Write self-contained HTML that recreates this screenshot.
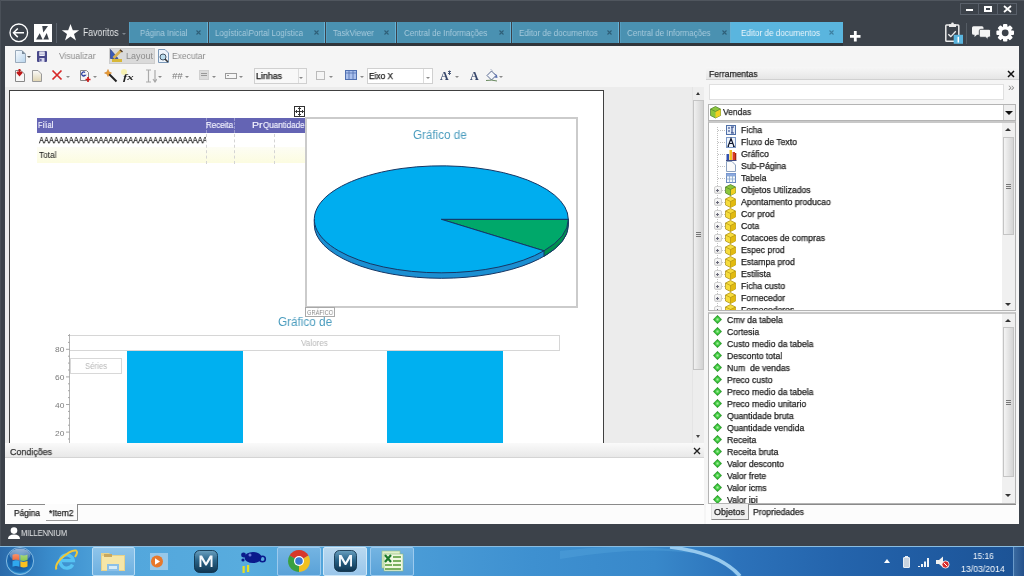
<!DOCTYPE html>
<html><head><meta charset="utf-8">
<style>
*{box-sizing:border-box}
html,body{margin:0;padding:0}
body{width:1024px;height:576px;overflow:hidden;position:relative;background:#3c424a;font-family:"Liberation Sans",sans-serif;color:#222}
.a{position:absolute}
.t{position:absolute;white-space:pre;line-height:1;transform-origin:0 0;will-change:transform}
.k{-webkit-text-stroke:0.25px currentColor}
.k2{-webkit-text-stroke:0.15px currentColor}
.dd{position:absolute;width:0;height:0;border-left:2.5px solid transparent;border-right:2.5px solid transparent;border-top:2.5px solid #8a8a8a;margin-left:0.5px;margin-top:0.5px}
</style></head><body>
<div class="a" style="left:0;top:0;width:1024px;height:1px;background:#50565e"></div>
<div class="a" style="left:0;top:0;width:1px;height:546px;background:#4a5058"></div>
<div class="a" style="left:960px;top:3px;width:57px;height:12px;border:1px solid #59606a"></div>
<div class="a" style="left:978px;top:3px;width:1px;height:12px;background:#59606a"></div>
<div class="a" style="left:997px;top:3px;width:1px;height:12px;background:#59606a"></div>
<div class="a" style="left:966px;top:9px;width:7px;height:2px;background:#fff"></div>
<div class="a" style="left:984px;top:6px;width:8px;height:6px;border:2px solid #fff"></div>
<svg class="a" style="left:1003px;top:5px" width="9" height="8"><path d="M1 1L8 7M8 1L1 7" stroke="#fff" stroke-width="1.8"/></svg>
<svg class="a" style="left:8px;top:22px" width="22" height="22"><circle cx="10.8" cy="10.8" r="8.8" fill="none" stroke="#fff" stroke-width="1.3"/><path d="M5.5 10.8H16M9.8 6.5L5.5 10.8L9.8 15.1" fill="none" stroke="#fff" stroke-width="1.5"/></svg>
<svg class="a" style="left:34px;top:24px" width="18" height="18"><rect width="18" height="18" fill="#fff"/><path d="M8.2 2H14L9.3 8.4ZM2.1 15.6L5.7 9.3L8.6 15.6ZM9.3 15.6L12.7 8.9L14.9 15.6Z" fill="#3c424a"/></svg>
<div class="a" style="left:56px;top:23px;width:1px;height:20px;background:#59606a"></div>
<svg class="a" style="left:61px;top:23px" width="19" height="19"><path d="M9.5 1L11.8 7.2H18.2L13 11.1L15 17.5L9.5 13.6L4 17.5L6 11.1L0.8 7.2H7.2Z" fill="#fff"/></svg>
<div class="dd" style="left:121px;top:32px;border-top-color:#7d848c"></div>
<div class="t" style="left:82.7px;top:27.6px;font-size:10px;color:#e4e6e8;font-family:'Liberation Sans',sans-serif;font-weight:400;font-style:normal;transform:scaleX(0.866);">Favoritos</div>
<div class="a" style="left:129px;top:22px;width:79px;height:21px;background:#4a91b1;border-left:1px solid #569ec0;border-right:1px solid #66b2d6"></div>
<svg class="a" style="left:196px;top:30px" width="5" height="5"><path d="M0.5 0.5L4.5 4.5M4.5 0.5L0.5 4.5" stroke="#2f5f78" stroke-width="1.1"/></svg>
<div class="t" style="left:139.6px;top:28.8px;font-size:9px;color:#a6cadc;font-family:'Liberation Sans',sans-serif;font-weight:400;font-style:normal;transform:scaleX(0.886);">Página Inicial</div>
<div class="a" style="left:209px;top:22px;width:116px;height:21px;background:#4a91b1;border-left:1px solid #569ec0;border-right:1px solid #66b2d6"></div>
<svg class="a" style="left:314px;top:30px" width="5" height="5"><path d="M0.5 0.5L4.5 4.5M4.5 0.5L0.5 4.5" stroke="#2f5f78" stroke-width="1.1"/></svg>
<div class="t" style="left:215.2px;top:28.8px;font-size:9px;color:#a6cadc;font-family:'Liberation Sans',sans-serif;font-weight:400;font-style:normal;transform:scaleX(0.876);">Logística\Portal Logística</div>
<div class="a" style="left:326px;top:22px;width:70px;height:21px;background:#4a91b1;border-left:1px solid #569ec0;border-right:1px solid #66b2d6"></div>
<svg class="a" style="left:384px;top:30px" width="5" height="5"><path d="M0.5 0.5L4.5 4.5M4.5 0.5L0.5 4.5" stroke="#2f5f78" stroke-width="1.1"/></svg>
<div class="t" style="left:333.4px;top:28.8px;font-size:9px;color:#a6cadc;font-family:'Liberation Sans',sans-serif;font-weight:400;font-style:normal;transform:scaleX(0.896);">TaskViewer</div>
<div class="a" style="left:397px;top:22px;width:114px;height:21px;background:#4a91b1;border-left:1px solid #569ec0;border-right:1px solid #66b2d6"></div>
<svg class="a" style="left:499px;top:30px" width="5" height="5"><path d="M0.5 0.5L4.5 4.5M4.5 0.5L0.5 4.5" stroke="#2f5f78" stroke-width="1.1"/></svg>
<div class="t" style="left:403.9px;top:28.8px;font-size:9px;color:#a6cadc;font-family:'Liberation Sans',sans-serif;font-weight:400;font-style:normal;transform:scaleX(0.891);">Central de Informações</div>
<div class="a" style="left:512px;top:22px;width:107px;height:21px;background:#4a91b1;border-left:1px solid #569ec0;border-right:1px solid #66b2d6"></div>
<svg class="a" style="left:607px;top:30px" width="5" height="5"><path d="M0.5 0.5L4.5 4.5M4.5 0.5L0.5 4.5" stroke="#2f5f78" stroke-width="1.1"/></svg>
<div class="t" style="left:518.5px;top:28.8px;font-size:9px;color:#a6cadc;font-family:'Liberation Sans',sans-serif;font-weight:400;font-style:normal;transform:scaleX(0.900);">Editor de documentos</div>
<div class="a" style="left:620px;top:22px;width:111px;height:21px;background:#4a91b1;border-left:1px solid #569ec0;border-right:1px solid #66b2d6"></div>
<svg class="a" style="left:722px;top:30px" width="5" height="5"><path d="M0.5 0.5L4.5 4.5M4.5 0.5L0.5 4.5" stroke="#2f5f78" stroke-width="1.1"/></svg>
<div class="t" style="left:626.7px;top:28.8px;font-size:9px;color:#a6cadc;font-family:'Liberation Sans',sans-serif;font-weight:400;font-style:normal;transform:scaleX(0.894);">Central de Informações</div>
<div class="a" style="left:731px;top:22px;width:112px;height:21px;background:#5ab5de;border-left:1px solid #5ab5de;border-right:1px solid #5ab5de"></div>
<svg class="a" style="left:829px;top:30px" width="5" height="5"><path d="M0.5 0.5L4.5 4.5M4.5 0.5L0.5 4.5" stroke="#3d7fa0" stroke-width="1.1"/></svg>
<div class="t" style="left:740.7px;top:28.8px;font-size:9px;color:#eaf5fb;font-family:'Liberation Sans',sans-serif;font-weight:400;font-style:normal;transform:scaleX(0.903);">Editor de documentos</div>
<svg class="a" style="left:849px;top:30px" width="13" height="13"><path d="M6.3 1V11.5M1 6.3H11.5" stroke="#fff" stroke-width="2.8"/></svg>
<svg class="a" style="left:944px;top:22px" width="22" height="23"><rect x="1.8" y="3" width="13" height="16.2" rx="0.8" fill="none" stroke="#ececec" stroke-width="1.5"/><path d="M5 2.2H12V5H5Z" fill="#ececec"/><circle cx="8.5" cy="1.8" r="1.3" fill="#ececec"/><path d="M4.3 12.3L6.8 14.6L11.8 9.3" fill="none" stroke="#ececec" stroke-width="1.3"/><rect x="9.7" y="12.8" width="9.3" height="9" fill="#5ab5de"/><path d="M14.3 14.8V20.5" stroke="#fff" stroke-width="1.5"/></svg>
<div class="a" style="left:966px;top:23px;width:1px;height:21px;background:#555c64"></div>
<svg class="a" style="left:971px;top:25px" width="21" height="16"><path d="M2.5 1.2H11A1.5 1.5 0 0 1 12.5 2.7V8.3A1.5 1.5 0 0 1 11 9.8H6L3.5 12V9.8H2.5A1.5 1.5 0 0 1 1 8.3V2.7A1.5 1.5 0 0 1 2.5 1.2Z" fill="#f4f4f4"/><path d="M9.8 4.3H18A1.5 1.5 0 0 1 19.5 5.8V10.8A1.5 1.5 0 0 1 18 12.3H17V14.5L14.5 12.3H9.8A1.5 1.5 0 0 1 8.3 10.8V5.8A1.5 1.5 0 0 1 9.8 4.3Z" fill="#f4f4f4" stroke="#3c424a" stroke-width="0.9"/></svg>
<svg class="a" style="left:995px;top:23px" width="21" height="20"><g transform="translate(10.2 9.8)"><g fill="#fff"><circle r="6.6"/><rect x="-2.2" y="-8.8" width="4.4" height="17.6" rx="1"/><rect x="-2.2" y="-8.8" width="4.4" height="17.6" rx="1" transform="rotate(45)"/><rect x="-2.2" y="-8.8" width="4.4" height="17.6" rx="1" transform="rotate(90)"/><rect x="-2.2" y="-8.8" width="4.4" height="17.6" rx="1" transform="rotate(135)"/></g><circle r="3.4" fill="#3c424a"/></g></svg>
<div class="a" style="left:129px;top:43px;width:714px;height:3px;background:#30353b"></div>
<div class="a" style="left:5px;top:46px;width:1014px;height:478px;background:#f5f5f5"></div>
<svg class="a" style="left:14.5px;top:49.5px" width="11" height="13"><defs><linearGradient id="nd" x1="0" y1="0" x2="1" y2="1"><stop offset="0" stop-color="#f8fbfe"/><stop offset="1" stop-color="#b8d4ec"/></linearGradient></defs><path d="M0.5 0.5H7L10.5 4V12.5H0.5Z" fill="url(#nd)" stroke="#9aaabb"/><path d="M7 0.5V4H10.5Z" fill="#7a8a9a"/></svg>
<div class="dd" style="left:26.5px;top:55.5px;border-top-color:#555"></div>
<svg class="a" style="left:37px;top:50.5px" width="10" height="11"><path d="M0 1Q0 0 1 0H9Q10 0 10 1V10Q10 11 9 11H1Q0 11 0 10Z" fill="#48488a"/><rect x="2.3" y="0.5" width="5.4" height="4.5" fill="#f4f4fa"/><path d="M3 2H7M3 3.5H7" stroke="#9a9ac8" stroke-width="0.6"/><rect x="2.5" y="7" width="5" height="4" fill="#d8d8ee"/><rect x="3.2" y="7.8" width="1.3" height="2.5" fill="#48488a"/></svg>
<div class="a" style="left:109px;top:48px;width:46px;height:16px;background:#dadada;border:1px solid #cdcdcd"></div>
<svg class="a" style="left:110px;top:49px" width="14" height="14"><path d="M0.5 0.5L8 9.5H0.5Z" fill="#3a5ab8" stroke="#283c80" stroke-width="0.7"/><path d="M3.5 9L11 1.5" stroke="#d8b050" stroke-width="2.6"/><path d="M10 0.8L12.5 3" stroke="#503820" stroke-width="1.5"/><rect x="2" y="10" width="10" height="3" fill="#d8b838"/></svg>
<svg class="a" style="left:157px;top:49px" width="13" height="14"><path d="M1.5 0.5H8L11.5 4V13.5H1.5Z" fill="#eef4fb" stroke="#7a98b8"/><circle cx="6" cy="8" r="3" fill="#bde" stroke="#456"/><path d="M8 10L11 13" stroke="#333" stroke-width="1.5"/></svg>
<div class="t" style="left:59.4px;top:52.3px;font-size:9px;color:#8c8c8c;font-family:'Liberation Sans',sans-serif;font-weight:400;font-style:normal;transform:scaleX(0.944);">Visualizar</div>
<div class="t" style="left:125.5px;top:52.3px;font-size:9px;color:#8c8c8c;font-family:'Liberation Sans',sans-serif;font-weight:400;font-style:normal;transform:scaleX(0.988);">Layout</div>
<div class="t" style="left:172.4px;top:52.3px;font-size:9px;color:#8c8c8c;font-family:'Liberation Sans',sans-serif;font-weight:400;font-style:normal;transform:scaleX(0.940);">Executar</div>
<svg class="a" style="left:14px;top:69px" width="12" height="13"><path d="M1.5 1.5H7L10.5 5V12.5H1.5Z" fill="#f8f8f8" stroke="#888"/><path d="M5.5 0V5M3 3L5.5 6L8 3" fill="none" stroke="#c01818" stroke-width="2"/></svg>
<svg class="a" style="left:31px;top:69px" width="12" height="13"><defs><linearGradient id="dg" x1="0" y1="0" x2="0" y2="1"><stop offset="0" stop-color="#fafafa"/><stop offset="1" stop-color="#e0d4b0"/></linearGradient></defs><path d="M1.5 1.5H7L10.5 5V12.5H1.5Z" fill="url(#dg)" stroke="#9a9a9a"/></svg>
<svg class="a" style="left:51px;top:69px" width="12" height="12"><path d="M1.5 1.5L10.5 10.5M10.5 1.5L1.5 10.5" stroke="#d82828" stroke-width="1.7"/></svg>
<div class="dd" style="left:65px;top:75px"></div>
<svg class="a" style="left:79px;top:69px" width="13" height="14"><path d="M1.5 1.5H7.5L9.5 3.5V11.5H1.5Z" fill="#f6f6f6" stroke="#888"/><path d="M6 3.5A2 2 0 1 0 6 6.5H4.5" fill="none" stroke="#2a40a0" stroke-width="1.3"/><path d="M9 8V13M6.5 10.5H11.5" stroke="#d01818" stroke-width="1.6"/></svg>
<div class="dd" style="left:92px;top:75px"></div>
<svg class="a" style="left:104px;top:69px" width="14" height="14"><path d="M5 5L12.5 12.5" stroke="#222" stroke-width="2"/><path d="M4 0.5L5 3L7.5 4L5 5L4 7.5L3 5L0.5 4L3 3Z" fill="#e89a30" stroke="#c87010" stroke-width="0.5"/></svg>
<svg class="a" style="left:144px;top:69px" width="13" height="14"><path d="M2 1H7M2 13H7M4.5 1V13M11 1V12M9 10L11 13L13 10" fill="none" stroke="#aaa" stroke-width="1.2"/></svg>
<div class="dd" style="left:157px;top:75px"></div>
<div class="dd" style="left:184px;top:75px"></div>
<div class="a" style="left:199px;top:70px;width:10px;height:10px;background:#dcdcdc;border:1px solid #d0d0d0"></div><div class="a" style="left:201px;top:73px;width:6px;height:1px;background:#999;box-shadow:0 2px 0 #999"></div>
<div class="dd" style="left:211px;top:75px"></div>
<div class="a" style="left:225px;top:72.5px;width:12px;height:6px;border:1px solid #9a9a9a;background:#f6f6f6"></div><div class="a" style="left:227px;top:75px;width:2px;height:1px;background:#999"></div>
<div class="dd" style="left:238px;top:75px"></div>
<div class="a" style="left:254px;top:68px;width:53px;height:16px;background:#f8f8f8;border:1px solid #d0d0d0"></div>
<div class="a" style="left:298px;top:69px;width:1px;height:14px;background:#dcdcdc"></div>
<div class="dd" style="left:298.5px;top:76px"></div>
<div class="a" style="left:316px;top:71px;width:9px;height:9px;border:1px solid #bbb"></div>
<div class="dd" style="left:328px;top:75px"></div>
<svg class="a" style="left:345px;top:70px" width="12" height="10"><rect x="0.5" y="0.5" width="11" height="9" fill="#aac0ec" stroke="#5070b0"/><path d="M0.5 3H11.5M4 0.5V9.5M8 0.5V9.5" stroke="#5070b0" stroke-width="0.8"/></svg>
<div class="dd" style="left:359px;top:75px"></div>
<div class="a" style="left:367px;top:68px;width:66px;height:16px;background:#fff;border:1px solid #d0d0d0"></div>
<div class="a" style="left:423px;top:69px;width:1px;height:14px;background:#dcdcdc"></div>
<div class="dd" style="left:425px;top:76px"></div>
<div class="dd" style="left:454px;top:75px"></div>
<svg class="a" style="left:485px;top:68px" width="14" height="15"><path d="M6 1.5L7 2.5" stroke="#6a7aa0" stroke-width="1"/><path d="M2 7.5L6.5 3L11 7.5L6.5 12Z" fill="#f4f6fa" stroke="#5a6a90" stroke-width="1"/><path d="M8.5 5L11 7.5L9.5 9.5L12.5 10L12 7Z" fill="#5a70b0"/><path d="M1 12.5Q7 11.5 12 13" fill="none" stroke="#6a8a60" stroke-width="1"/></svg>
<div class="dd" style="left:498px;top:75px"></div>
<div class="a" style="left:121px;top:69px;width:6px;height:6px;border-radius:3px;background:#f8f0a0;opacity:0.8"></div>
<div class="t" style="left:122.7px;top:72.5px;font-size:9px;color:#222;font-family:'Liberation Serif',serif;font-weight:700;font-style:italic;transform:scaleX(1.413);">fx</div>
<div class="t" style="left:171.7px;top:72.0px;font-size:9px;color:#7a7a7a;font-family:'Liberation Sans',sans-serif;font-weight:400;font-style:italic;transform:scaleX(1.058);">##</div>
<div class="t k" style="left:255.5px;top:72.0px;font-size:9px;color:#1a1a1a;font-family:'Liberation Sans',sans-serif;font-weight:400;font-style:normal;transform:scaleX(0.980);">Linhas</div>
<div class="t k" style="left:368.5px;top:72.0px;font-size:9px;color:#1a1a1a;font-family:'Liberation Sans',sans-serif;font-weight:400;font-style:normal;transform:scaleX(0.926);">Eixo X</div>
<div class="t" style="left:439.9px;top:69.5px;font-size:12px;color:#36466a;font-family:'Liberation Serif',serif;font-weight:700;font-style:normal;transform:scaleX(0.969);">A</div>
<div class="t" style="left:469.5px;top:69.5px;font-size:12px;color:#36466a;font-family:'Liberation Serif',serif;font-weight:700;font-style:normal;transform:scaleX(0.957);">A</div>
<svg class="a" style="left:447px;top:69.5px" width="5" height="6"><path d="M1 1L4 4M4 1L1 4M2.5 0.5V5" stroke="#36466a" stroke-width="0.9"/></svg>
<div class="a" style="left:5px;top:87px;width:699px;height:356px;background:#ececec"></div>
<div class="a" style="left:9px;top:90px;width:595px;height:353px;background:#fff;border:1px solid #404040;border-bottom:none"></div>
<div class="a" style="left:294px;top:106px;width:11px;height:11px;border:1px solid #333;background:#fff"></div>
<svg class="a" style="left:295px;top:107px" width="9" height="9"><path d="M4.5 0.5V8.5M0.5 4.5H8.5M3 2L4.5 0.5L6 2M3 7L4.5 8.5L6 7M2 3L0.5 4.5L2 6M7 3L8.5 4.5L7 6" fill="none" stroke="#222" stroke-width="0.9"/></svg>
<div class="a" style="left:37px;top:118px;width:268px;height:15px;background:#6464b4"></div>
<div class="a" style="left:37px;top:147px;width:268px;height:16px;background:linear-gradient(#fdfdf4,#fcfce0)"></div>
<div class="a" style="left:206px;top:118px;width:0;height:15px;border-left:1px dashed #9898cc"></div>
<div class="a" style="left:234px;top:118px;width:0;height:15px;border-left:1px dashed #9898cc"></div>
<div class="a" style="left:206px;top:134px;width:0;height:30px;border-left:1px dashed #d4d4d4"></div>
<div class="a" style="left:234px;top:134px;width:0;height:30px;border-left:1px dashed #d4d4d4"></div>
<div class="a" style="left:274px;top:134px;width:0;height:30px;border-left:1px dashed #d4d4d4"></div>
<div class="t k2" style="left:38.4px;top:121.4px;font-size:9px;color:#f4f4ff;font-family:'Liberation Sans',sans-serif;font-weight:400;font-style:normal;transform:scaleX(0.826);">Filial</div>
<div class="t k2" style="left:206.2px;top:121.4px;font-size:9px;color:#f4f4ff;font-family:'Liberation Sans',sans-serif;font-weight:400;font-style:normal;transform:scaleX(0.888);">Receita</div>
<div class="t k2" style="left:251.7px;top:121.4px;font-size:9px;color:#f4f4ff;font-family:'Liberation Sans',sans-serif;font-weight:400;font-style:normal;transform:scaleX(1.178);">Pr</div>
<div class="t k2" style="left:262.7px;top:121.4px;font-size:9px;color:#f4f4ff;font-family:'Liberation Sans',sans-serif;font-weight:400;font-style:normal;transform:scaleX(0.894);">Quantidade</div>
<div class="a" style="left:37px;top:133px;width:169px;height:14px;overflow:hidden">
<div class="t k" style="left:1.8px;top:3.0px;font-size:9px;color:#1a1a1a;font-family:'Liberation Sans',sans-serif;font-weight:400;font-style:normal;transform:scaleX(0.826);">AAAAAAAAAAAAAAAAAAAAAAAAAAAAAAAAAA</div>
</div>
<div class="t" style="left:38.8px;top:151.2px;font-size:9px;color:#111;font-family:'Liberation Sans',sans-serif;font-weight:400;font-style:normal;transform:scaleX(0.920);">Total</div>
<div class="a" style="left:305px;top:117px;width:273px;height:191px;border:2px solid #cbcbcb"></div>
<svg class="a" style="left:305px;top:150px" width="273" height="140">
<g transform="translate(136.3 69.3)">
<path d="M-127 0V5.5A127 53.5 0 0 0 127 5.5V0Z" fill="#1b8fd2" stroke="#163664" stroke-width="1"/>
<path d="M102.7 31.5V37A127 53.5 0 0 0 127 5.5V0Z" fill="#00904f" stroke="#163664" stroke-width="1"/>
<path d="M0 0L127 0A127 53.5 0 0 1 102.7 31.5Z" fill="#00a86a" stroke="#163664" stroke-width="1"/>
<path d="M0 0L102.7 31.5A127 53.5 0 1 1 127 0Z" fill="#00adef" stroke="#163664" stroke-width="1"/>
</g></svg>
<div class="a" style="left:305px;top:307px;width:30px;height:10px;border:1px solid #a8a8a8;background:#fff"></div>
<div class="t" style="left:412.6px;top:128.8px;font-size:12px;color:#4a9cbe;font-family:'Liberation Sans',sans-serif;font-weight:400;font-style:normal;transform:scaleX(0.970);">Gráfico de</div>
<div class="t" style="left:306.7px;top:308.5px;font-size:7px;color:#8a8a8a;font-family:'Liberation Sans',sans-serif;font-weight:400;font-style:normal;transform:scaleX(0.818);">GRÁFICO</div>
<div class="t" style="left:278.2px;top:315.8px;font-size:12px;color:#4a9cbe;font-family:'Liberation Sans',sans-serif;font-weight:400;font-style:normal;transform:scaleX(0.977);">Gráfico de</div>
<div class="a" style="left:70px;top:335px;width:490px;height:16px;border:1px solid #d6d6d6;border-left:none"></div>
<div class="a" style="left:69px;top:334px;width:1px;height:109px;background:#b4b4b4"></div>
<div class="a" style="left:70px;top:358px;width:52px;height:16px;border:1px solid #d8d8d8"></div>
<div class="a" style="left:127px;top:351px;width:116px;height:92px;background:#00b0f0"></div>
<div class="a" style="left:387px;top:351px;width:116px;height:92px;background:#00b0f0"></div>
<div class="t" style="left:301.3px;top:338.6px;font-size:9px;color:#b8b8b8;font-family:'Liberation Sans',sans-serif;font-weight:400;font-style:normal;transform:scaleX(0.901);">Valores</div>
<div class="t" style="left:84.5px;top:362.0px;font-size:9px;color:#b8b8b8;font-family:'Liberation Sans',sans-serif;font-weight:400;font-style:normal;transform:scaleX(0.866);">Séries</div>
<div class="t" style="left:54.7px;top:346.4px;font-size:8px;color:#7a7a7a;font-family:'Liberation Sans',sans-serif;font-weight:400;font-style:normal;transform:scaleX(1.050);">80</div>
<div class="t" style="left:54.7px;top:373.9px;font-size:8px;color:#7a7a7a;font-family:'Liberation Sans',sans-serif;font-weight:400;font-style:normal;transform:scaleX(1.050);">60</div>
<div class="t" style="left:54.7px;top:401.6px;font-size:8px;color:#7a7a7a;font-family:'Liberation Sans',sans-serif;font-weight:400;font-style:normal;transform:scaleX(1.050);">40</div>
<div class="t" style="left:54.7px;top:429.8px;font-size:8px;color:#7a7a7a;font-family:'Liberation Sans',sans-serif;font-weight:400;font-style:normal;transform:scaleX(1.050);">20</div>
<svg class="a" style="left:64px;top:330px" width="6" height="113"><rect x="4" y="5.0" width="2" height="1" fill="#a8a8a8"/><rect x="4" y="11.9" width="2" height="1" fill="#a8a8a8"/><rect x="2" y="18.8" width="4" height="1" fill="#a8a8a8"/><rect x="4" y="25.7" width="2" height="1" fill="#a8a8a8"/><rect x="4" y="32.6" width="2" height="1" fill="#a8a8a8"/><rect x="4" y="39.5" width="2" height="1" fill="#a8a8a8"/><rect x="2" y="46.4" width="4" height="1" fill="#a8a8a8"/><rect x="4" y="53.3" width="2" height="1" fill="#a8a8a8"/><rect x="4" y="60.2" width="2" height="1" fill="#a8a8a8"/><rect x="4" y="67.1" width="2" height="1" fill="#a8a8a8"/><rect x="2" y="74.0" width="4" height="1" fill="#a8a8a8"/><rect x="4" y="80.9" width="2" height="1" fill="#a8a8a8"/><rect x="4" y="87.8" width="2" height="1" fill="#a8a8a8"/><rect x="4" y="94.7" width="2" height="1" fill="#a8a8a8"/><rect x="2" y="101.6" width="4" height="1" fill="#a8a8a8"/><rect x="4" y="108.5" width="2" height="1" fill="#a8a8a8"/></svg>
<div class="a" style="left:692px;top:87px;width:12px;height:356px;background:#ededed;border-left:1px solid #e4e4e4"></div>
<div class="a" style="left:696px;top:91.5px;width:0;height:0;border-left:2.5px solid transparent;border-right:2.5px solid transparent;border-bottom:3px solid #333"></div>
<div class="a" style="left:693px;top:100px;width:11px;height:270px;background:linear-gradient(90deg,#f0f0f0,#d2d2d2);border:1px solid #c4c4c4"></div>
<div class="a" style="left:696px;top:232px;width:5px;height:1px;background:#777;box-shadow:0 2px 0 #777,0 4px 0 #777"></div>
<div class="a" style="left:696px;top:435px;width:0;height:0;border-left:2.5px solid transparent;border-right:2.5px solid transparent;border-top:3px solid #444"></div>
<div class="a" style="left:5px;top:443px;width:699px;height:15px;background:linear-gradient(#fafafa,#e8e8e8);border-bottom:1px solid #d4d4d4"></div>
<svg class="a" style="left:693px;top:447px" width="8" height="8"><path d="M1 1L7 7M7 1L1 7" stroke="#222" stroke-width="1.4"/></svg>
<div class="a" style="left:5px;top:458px;width:699px;height:46px;background:#fff"></div>
<div class="a" style="left:5px;top:504px;width:699px;height:20px;background:#fcfcfc"></div>
<div class="a" style="left:7px;top:504px;width:38px;height:1px;background:#8a8a8a"></div>
<div class="a" style="left:77px;top:504px;width:627px;height:1px;background:#8a8a8a"></div>
<div class="a" style="left:77px;top:504px;width:1px;height:17px;background:#8a8a8a"></div>
<div class="a" style="left:46px;top:520px;width:32px;height:1px;background:#9a9a9a"></div>
<div class="t k" style="left:9.7px;top:448.0px;font-size:9px;color:#333;font-family:'Liberation Sans',sans-serif;font-weight:400;font-style:normal;transform:scaleX(0.988);">Condições</div>
<div class="t k" style="left:14.3px;top:508.6px;font-size:9px;color:#222;font-family:'Liberation Sans',sans-serif;font-weight:400;font-style:normal;transform:scaleX(0.928);">Página</div>
<div class="t k" style="left:48.7px;top:508.6px;font-size:9px;color:#222;font-family:'Liberation Sans',sans-serif;font-weight:400;font-style:normal;transform:scaleX(0.942);">*Item2</div>

<div class="a" style="left:706px;top:67px;width:313px;height:13px;background:linear-gradient(#f7f7f7,#e6e6e6);border-bottom:1px solid #d0d0d0"></div>
<svg class="a" style="left:1007px;top:70px" width="8" height="8"><path d="M1 1L7 7M7 1L1 7" stroke="#111" stroke-width="1.5"/></svg>
<div class="a" style="left:709px;top:84px;width:295px;height:16px;background:#fff;border:1px solid #e0e0e0"></div>
<div class="a" style="left:708px;top:104px;width:308px;height:17px;background:#fff;border:1px solid #b4b4b4"></div>
<div class="a" style="left:1003px;top:105px;width:12px;height:15px;background:#eeeeee;border-left:1px solid #c8c8c8"></div>
<div class="a" style="left:1005px;top:111px;width:0;height:0;border-left:4px solid transparent;border-right:4px solid transparent;border-top:4px solid #111"></div>
<svg class="a" style="left:710px;top:106px" width="11" height="13"><path d="M5.5 0.5L10.5 3V9.5L5.5 12L0.5 9.5V3Z" fill="#8cc63c" stroke="#4a7a28" stroke-width="0.7"/><path d="M5.5 5.5V12L10.5 9.5V3Z" fill="#f0d020"/><path d="M0.5 3L5.5 5.5L10.5 3" fill="none" stroke="#4a7a28" stroke-width="0.6"/></svg>
<div class="t k" style="left:709.3px;top:70.1px;font-size:9px;color:#222;font-family:'Liberation Sans',sans-serif;font-weight:400;font-style:normal;transform:scaleX(0.952);">Ferramentas</div>
<div class="t" style="left:1007.7px;top:83.0px;font-size:10px;color:#8a8a8a;font-family:'Liberation Sans',sans-serif;font-weight:400;font-style:normal;transform:scaleX(1.187);">»</div>
<div class="t k" style="left:722.8px;top:107.6px;font-size:9px;color:#222;font-family:'Liberation Sans',sans-serif;font-weight:400;font-style:normal;transform:scaleX(0.942);">Vendas</div>
<div class="a" style="left:708px;top:121px;width:308px;height:190px;background:#fff;border:1px solid #b4b4b4;border-top:2px solid #c8c8c8"></div>
<div class="a" style="left:1002px;top:123px;width:13px;height:187px;background:#f0f0f0"></div>
<div class="a" style="left:1005px;top:128px;width:0;height:0;border-left:3px solid transparent;border-right:3px solid transparent;border-bottom:3px solid #333"></div>
<div class="a" style="left:1003px;top:137px;width:11px;height:98px;background:linear-gradient(90deg,#f4f4f4,#d4d4d4);border:1px solid #c4c4c4"></div>
<div class="a" style="left:1006px;top:184px;width:5px;height:1px;background:#777;box-shadow:0 2px 0 #777,0 4px 0 #777"></div>
<div class="a" style="left:1005px;top:303px;width:0;height:0;border-left:3px solid transparent;border-right:3px solid transparent;border-top:3px solid #333"></div>
<div class="a" style="left:709px;top:123px;width:293px;height:187px;overflow:hidden">
<div class="a" style="left:8px;top:4px;width:0;height:183px;border-left:1px dotted #c0c0c0"></div>
<div class="a" style="left:9px;top:7px;width:7px;height:0;border-top:1px dotted #c0c0c0"></div>
<svg class="a" style="left:17px;top:2px" width="10" height="10"><rect x="0.5" y="0.5" width="9" height="9" fill="#e4ecf8" stroke="#5070a8"/><path d="M2 3H4M2 6H4M6 2V8M5 2H8M5 8H8" stroke="#203a80" stroke-width="1"/></svg>
<div class="t k" style="left:32.0px;top:2.6px;font-size:9px;color:#1a1a1a;font-family:'Liberation Sans',sans-serif;font-weight:400;font-style:normal;transform:scaleX(0.96);">Ficha</div>
<div class="a" style="left:9px;top:19px;width:7px;height:0;border-top:1px dotted #c0c0c0"></div>
<svg class="a" style="left:17px;top:14px" width="10" height="11"><rect x="0.5" y="0.5" width="9" height="10" fill="#eef4fc" stroke="#7a98c8"/><path d="M2 9.5L5 1.5L8 9.5M3.2 6.5H6.8M1.5 9.5H3M7 9.5H8.8" fill="none" stroke="#101830" stroke-width="1.2"/></svg>
<div class="t k" style="left:32.0px;top:14.6px;font-size:9px;color:#1a1a1a;font-family:'Liberation Sans',sans-serif;font-weight:400;font-style:normal;transform:scaleX(0.96);">Fluxo de Texto</div>
<div class="a" style="left:9px;top:31px;width:7px;height:0;border-top:1px dotted #c0c0c0"></div>
<svg class="a" style="left:16px;top:26px" width="12" height="12"><path d="M1 11.5H11.5" stroke="#404a80" stroke-width="1"/><rect x="1.5" y="5" width="2.5" height="6" fill="#3050b0"/><rect x="4.5" y="1" width="2.5" height="10" fill="#f0c020"/><rect x="7.5" y="3" width="2.5" height="8" fill="#d83a20"/><rect x="10" y="4" width="1.3" height="7" fill="#a02010"/></svg>
<div class="t k" style="left:32.0px;top:26.6px;font-size:9px;color:#1a1a1a;font-family:'Liberation Sans',sans-serif;font-weight:400;font-style:normal;transform:scaleX(0.96);">Gráfico</div>
<div class="a" style="left:9px;top:43px;width:7px;height:0;border-top:1px dotted #c0c0c0"></div>
<svg class="a" style="left:17px;top:38px" width="10" height="11"><path d="M0.5 0.5H6L9.5 4V10.5H0.5Z" fill="#fafafa" stroke="#8aa0c0"/></svg>
<div class="t k" style="left:32.0px;top:38.6px;font-size:9px;color:#1a1a1a;font-family:'Liberation Sans',sans-serif;font-weight:400;font-style:normal;transform:scaleX(0.96);">Sub-Página</div>
<div class="a" style="left:9px;top:55px;width:7px;height:0;border-top:1px dotted #c0c0c0"></div>
<svg class="a" style="left:17px;top:50px" width="10" height="10"><rect x="0.5" y="0.5" width="9" height="9" fill="#f4f8fc" stroke="#6a8ac0"/><rect x="0.5" y="0.5" width="9" height="2.5" fill="#8aa8e0"/><path d="M0.5 3H9.5M0.5 6H9.5M3.5 3V9.5M6.5 3V9.5" stroke="#8aa8d0" stroke-width="0.8"/></svg>
<div class="t k" style="left:32.0px;top:50.6px;font-size:9px;color:#1a1a1a;font-family:'Liberation Sans',sans-serif;font-weight:400;font-style:normal;transform:scaleX(0.96);">Tabela</div>
<div class="a" style="left:4.5px;top:63px;width:8px;height:8px;border:1px solid #d0d0d0;border-radius:2px;background:linear-gradient(#fafafa,#e4e4e4)"></div><div class="a" style="left:7px;top:66.5px;width:3px;height:1px;background:#6a6a7a"></div><div class="a" style="left:8px;top:65.5px;width:1px;height:3px;background:#6a6a7a"></div><div class="a" style="left:12.5px;top:67px;width:3.5px;height:0;border-top:1px dotted #c8c8c8"></div><svg class="a" style="left:16px;top:61px" width="11" height="12"><path d="M5.5 0.5L10.5 3V9L5.5 11.5L0.5 9V3Z" fill="#8cc63c" stroke="#4a7a28" stroke-width="0.7"/><path d="M5.5 5.5V11.5L10.5 9V3Z" fill="#f0d020"/><path d="M0.5 3L5.5 5.5L10.5 3M5.5 5.5V11.5" fill="none" stroke="#4a7a28" stroke-width="0.6"/></svg>
<div class="t k" style="left:32.0px;top:62.6px;font-size:9px;color:#1a1a1a;font-family:'Liberation Sans',sans-serif;font-weight:400;font-style:normal;transform:scaleX(0.96);">Objetos Utilizados</div>
<div class="a" style="left:4.5px;top:75px;width:8px;height:8px;border:1px solid #d0d0d0;border-radius:2px;background:linear-gradient(#fafafa,#e4e4e4)"></div><div class="a" style="left:7px;top:78.5px;width:3px;height:1px;background:#6a6a7a"></div><div class="a" style="left:8px;top:77.5px;width:1px;height:3px;background:#6a6a7a"></div><div class="a" style="left:12.5px;top:79px;width:3.5px;height:0;border-top:1px dotted #c8c8c8"></div><svg class="a" style="left:16px;top:73px" width="11" height="12"><path d="M5.5 0.5L10.5 3V9L5.5 11.5L0.5 9V3Z" fill="#f6dc3c" stroke="#a88a10" stroke-width="0.7"/><path d="M5.5 5.5V11.5L10.5 9V3Z" fill="#e2ba10"/><path d="M0.5 3L5.5 5.5L10.5 3M5.5 5.5V11.5" fill="none" stroke="#a88a10" stroke-width="0.6"/></svg>
<div class="t k" style="left:32.0px;top:74.6px;font-size:9px;color:#1a1a1a;font-family:'Liberation Sans',sans-serif;font-weight:400;font-style:normal;transform:scaleX(0.96);">Apontamento producao</div>
<div class="a" style="left:4.5px;top:87px;width:8px;height:8px;border:1px solid #d0d0d0;border-radius:2px;background:linear-gradient(#fafafa,#e4e4e4)"></div><div class="a" style="left:7px;top:90.5px;width:3px;height:1px;background:#6a6a7a"></div><div class="a" style="left:8px;top:89.5px;width:1px;height:3px;background:#6a6a7a"></div><div class="a" style="left:12.5px;top:91px;width:3.5px;height:0;border-top:1px dotted #c8c8c8"></div><svg class="a" style="left:16px;top:85px" width="11" height="12"><path d="M5.5 0.5L10.5 3V9L5.5 11.5L0.5 9V3Z" fill="#f6dc3c" stroke="#a88a10" stroke-width="0.7"/><path d="M5.5 5.5V11.5L10.5 9V3Z" fill="#e2ba10"/><path d="M0.5 3L5.5 5.5L10.5 3M5.5 5.5V11.5" fill="none" stroke="#a88a10" stroke-width="0.6"/></svg>
<div class="t k" style="left:32.0px;top:86.6px;font-size:9px;color:#1a1a1a;font-family:'Liberation Sans',sans-serif;font-weight:400;font-style:normal;transform:scaleX(0.96);">Cor prod</div>
<div class="a" style="left:4.5px;top:99px;width:8px;height:8px;border:1px solid #d0d0d0;border-radius:2px;background:linear-gradient(#fafafa,#e4e4e4)"></div><div class="a" style="left:7px;top:102.5px;width:3px;height:1px;background:#6a6a7a"></div><div class="a" style="left:8px;top:101.5px;width:1px;height:3px;background:#6a6a7a"></div><div class="a" style="left:12.5px;top:103px;width:3.5px;height:0;border-top:1px dotted #c8c8c8"></div><svg class="a" style="left:16px;top:97px" width="11" height="12"><path d="M5.5 0.5L10.5 3V9L5.5 11.5L0.5 9V3Z" fill="#f6dc3c" stroke="#a88a10" stroke-width="0.7"/><path d="M5.5 5.5V11.5L10.5 9V3Z" fill="#e2ba10"/><path d="M0.5 3L5.5 5.5L10.5 3M5.5 5.5V11.5" fill="none" stroke="#a88a10" stroke-width="0.6"/></svg>
<div class="t k" style="left:32.0px;top:98.6px;font-size:9px;color:#1a1a1a;font-family:'Liberation Sans',sans-serif;font-weight:400;font-style:normal;transform:scaleX(0.96);">Cota</div>
<div class="a" style="left:4.5px;top:111px;width:8px;height:8px;border:1px solid #d0d0d0;border-radius:2px;background:linear-gradient(#fafafa,#e4e4e4)"></div><div class="a" style="left:7px;top:114.5px;width:3px;height:1px;background:#6a6a7a"></div><div class="a" style="left:8px;top:113.5px;width:1px;height:3px;background:#6a6a7a"></div><div class="a" style="left:12.5px;top:115px;width:3.5px;height:0;border-top:1px dotted #c8c8c8"></div><svg class="a" style="left:16px;top:109px" width="11" height="12"><path d="M5.5 0.5L10.5 3V9L5.5 11.5L0.5 9V3Z" fill="#f6dc3c" stroke="#a88a10" stroke-width="0.7"/><path d="M5.5 5.5V11.5L10.5 9V3Z" fill="#e2ba10"/><path d="M0.5 3L5.5 5.5L10.5 3M5.5 5.5V11.5" fill="none" stroke="#a88a10" stroke-width="0.6"/></svg>
<div class="t k" style="left:32.0px;top:110.6px;font-size:9px;color:#1a1a1a;font-family:'Liberation Sans',sans-serif;font-weight:400;font-style:normal;transform:scaleX(0.96);">Cotacoes de compras</div>
<div class="a" style="left:4.5px;top:123px;width:8px;height:8px;border:1px solid #d0d0d0;border-radius:2px;background:linear-gradient(#fafafa,#e4e4e4)"></div><div class="a" style="left:7px;top:126.5px;width:3px;height:1px;background:#6a6a7a"></div><div class="a" style="left:8px;top:125.5px;width:1px;height:3px;background:#6a6a7a"></div><div class="a" style="left:12.5px;top:127px;width:3.5px;height:0;border-top:1px dotted #c8c8c8"></div><svg class="a" style="left:16px;top:121px" width="11" height="12"><path d="M5.5 0.5L10.5 3V9L5.5 11.5L0.5 9V3Z" fill="#f6dc3c" stroke="#a88a10" stroke-width="0.7"/><path d="M5.5 5.5V11.5L10.5 9V3Z" fill="#e2ba10"/><path d="M0.5 3L5.5 5.5L10.5 3M5.5 5.5V11.5" fill="none" stroke="#a88a10" stroke-width="0.6"/></svg>
<div class="t k" style="left:32.0px;top:122.6px;font-size:9px;color:#1a1a1a;font-family:'Liberation Sans',sans-serif;font-weight:400;font-style:normal;transform:scaleX(0.96);">Espec prod</div>
<div class="a" style="left:4.5px;top:135px;width:8px;height:8px;border:1px solid #d0d0d0;border-radius:2px;background:linear-gradient(#fafafa,#e4e4e4)"></div><div class="a" style="left:7px;top:138.5px;width:3px;height:1px;background:#6a6a7a"></div><div class="a" style="left:8px;top:137.5px;width:1px;height:3px;background:#6a6a7a"></div><div class="a" style="left:12.5px;top:139px;width:3.5px;height:0;border-top:1px dotted #c8c8c8"></div><svg class="a" style="left:16px;top:133px" width="11" height="12"><path d="M5.5 0.5L10.5 3V9L5.5 11.5L0.5 9V3Z" fill="#f6dc3c" stroke="#a88a10" stroke-width="0.7"/><path d="M5.5 5.5V11.5L10.5 9V3Z" fill="#e2ba10"/><path d="M0.5 3L5.5 5.5L10.5 3M5.5 5.5V11.5" fill="none" stroke="#a88a10" stroke-width="0.6"/></svg>
<div class="t k" style="left:32.0px;top:134.6px;font-size:9px;color:#1a1a1a;font-family:'Liberation Sans',sans-serif;font-weight:400;font-style:normal;transform:scaleX(0.96);">Estampa prod</div>
<div class="a" style="left:4.5px;top:147px;width:8px;height:8px;border:1px solid #d0d0d0;border-radius:2px;background:linear-gradient(#fafafa,#e4e4e4)"></div><div class="a" style="left:7px;top:150.5px;width:3px;height:1px;background:#6a6a7a"></div><div class="a" style="left:8px;top:149.5px;width:1px;height:3px;background:#6a6a7a"></div><div class="a" style="left:12.5px;top:151px;width:3.5px;height:0;border-top:1px dotted #c8c8c8"></div><svg class="a" style="left:16px;top:145px" width="11" height="12"><path d="M5.5 0.5L10.5 3V9L5.5 11.5L0.5 9V3Z" fill="#f6dc3c" stroke="#a88a10" stroke-width="0.7"/><path d="M5.5 5.5V11.5L10.5 9V3Z" fill="#e2ba10"/><path d="M0.5 3L5.5 5.5L10.5 3M5.5 5.5V11.5" fill="none" stroke="#a88a10" stroke-width="0.6"/></svg>
<div class="t k" style="left:32.0px;top:146.6px;font-size:9px;color:#1a1a1a;font-family:'Liberation Sans',sans-serif;font-weight:400;font-style:normal;transform:scaleX(0.96);">Estilista</div>
<div class="a" style="left:4.5px;top:159px;width:8px;height:8px;border:1px solid #d0d0d0;border-radius:2px;background:linear-gradient(#fafafa,#e4e4e4)"></div><div class="a" style="left:7px;top:162.5px;width:3px;height:1px;background:#6a6a7a"></div><div class="a" style="left:8px;top:161.5px;width:1px;height:3px;background:#6a6a7a"></div><div class="a" style="left:12.5px;top:163px;width:3.5px;height:0;border-top:1px dotted #c8c8c8"></div><svg class="a" style="left:16px;top:157px" width="11" height="12"><path d="M5.5 0.5L10.5 3V9L5.5 11.5L0.5 9V3Z" fill="#f6dc3c" stroke="#a88a10" stroke-width="0.7"/><path d="M5.5 5.5V11.5L10.5 9V3Z" fill="#e2ba10"/><path d="M0.5 3L5.5 5.5L10.5 3M5.5 5.5V11.5" fill="none" stroke="#a88a10" stroke-width="0.6"/></svg>
<div class="t k" style="left:32.0px;top:158.6px;font-size:9px;color:#1a1a1a;font-family:'Liberation Sans',sans-serif;font-weight:400;font-style:normal;transform:scaleX(0.96);">Ficha custo</div>
<div class="a" style="left:4.5px;top:171px;width:8px;height:8px;border:1px solid #d0d0d0;border-radius:2px;background:linear-gradient(#fafafa,#e4e4e4)"></div><div class="a" style="left:7px;top:174.5px;width:3px;height:1px;background:#6a6a7a"></div><div class="a" style="left:8px;top:173.5px;width:1px;height:3px;background:#6a6a7a"></div><div class="a" style="left:12.5px;top:175px;width:3.5px;height:0;border-top:1px dotted #c8c8c8"></div><svg class="a" style="left:16px;top:169px" width="11" height="12"><path d="M5.5 0.5L10.5 3V9L5.5 11.5L0.5 9V3Z" fill="#f6dc3c" stroke="#a88a10" stroke-width="0.7"/><path d="M5.5 5.5V11.5L10.5 9V3Z" fill="#e2ba10"/><path d="M0.5 3L5.5 5.5L10.5 3M5.5 5.5V11.5" fill="none" stroke="#a88a10" stroke-width="0.6"/></svg>
<div class="t k" style="left:32.0px;top:170.6px;font-size:9px;color:#1a1a1a;font-family:'Liberation Sans',sans-serif;font-weight:400;font-style:normal;transform:scaleX(0.96);">Fornecedor</div>
<div class="a" style="left:4.5px;top:183px;width:8px;height:8px;border:1px solid #d0d0d0;border-radius:2px;background:linear-gradient(#fafafa,#e4e4e4)"></div><div class="a" style="left:7px;top:186.5px;width:3px;height:1px;background:#6a6a7a"></div><div class="a" style="left:8px;top:185.5px;width:1px;height:3px;background:#6a6a7a"></div><div class="a" style="left:12.5px;top:187px;width:3.5px;height:0;border-top:1px dotted #c8c8c8"></div><svg class="a" style="left:16px;top:181px" width="11" height="12"><path d="M5.5 0.5L10.5 3V9L5.5 11.5L0.5 9V3Z" fill="#f6dc3c" stroke="#a88a10" stroke-width="0.7"/><path d="M5.5 5.5V11.5L10.5 9V3Z" fill="#e2ba10"/><path d="M0.5 3L5.5 5.5L10.5 3M5.5 5.5V11.5" fill="none" stroke="#a88a10" stroke-width="0.6"/></svg>
<div class="t k" style="left:32.0px;top:182.6px;font-size:9px;color:#1a1a1a;font-family:'Liberation Sans',sans-serif;font-weight:400;font-style:normal;transform:scaleX(0.96);">Fornecedores</div>
</div>
<div class="a" style="left:708px;top:312px;width:308px;height:192px;background:#fff;border:1px solid #b4b4b4;border-top:2px solid #c8c8c8"></div>
<div class="a" style="left:1002px;top:314px;width:13px;height:189px;background:#f0f0f0"></div>
<div class="a" style="left:1005px;top:319px;width:0;height:0;border-left:3px solid transparent;border-right:3px solid transparent;border-bottom:3px solid #333"></div>
<div class="a" style="left:1003px;top:327px;width:11px;height:150px;background:linear-gradient(90deg,#f4f4f4,#d4d4d4);border:1px solid #c4c4c4"></div>
<div class="a" style="left:1006px;top:400px;width:5px;height:1px;background:#777;box-shadow:0 2px 0 #777,0 4px 0 #777"></div>
<div class="a" style="left:1005px;top:494px;width:0;height:0;border-left:3px solid transparent;border-right:3px solid transparent;border-top:3px solid #333"></div>
<div class="a" style="left:709px;top:314px;width:293px;height:189px;overflow:hidden">
<svg class="a" style="left:3.5px;top:0.9px" width="9" height="9"><defs><radialGradient id="dm0" cx="50%" cy="50%" r="50%"><stop offset="0" stop-color="#a8f0a0"/><stop offset="0.5" stop-color="#3cc83c"/><stop offset="1" stop-color="#1a8a1a"/></radialGradient></defs><path d="M4.5 0.3L8.7 4.5L4.5 8.7L0.3 4.5Z" fill="url(#dm0)" stroke="#208a20" stroke-width="0.5"/></svg>
<div class="t k" style="left:18.0px;top:1.8px;font-size:9px;color:#1a1a1a;font-family:'Liberation Sans',sans-serif;font-weight:400;font-style:normal;transform:scaleX(0.96);">Cmv da tabela</div>
<svg class="a" style="left:3.5px;top:12.9px" width="9" height="9"><defs><radialGradient id="dm1" cx="50%" cy="50%" r="50%"><stop offset="0" stop-color="#a8f0a0"/><stop offset="0.5" stop-color="#3cc83c"/><stop offset="1" stop-color="#1a8a1a"/></radialGradient></defs><path d="M4.5 0.3L8.7 4.5L4.5 8.7L0.3 4.5Z" fill="url(#dm1)" stroke="#208a20" stroke-width="0.5"/></svg>
<div class="t k" style="left:18.0px;top:13.8px;font-size:9px;color:#1a1a1a;font-family:'Liberation Sans',sans-serif;font-weight:400;font-style:normal;transform:scaleX(0.96);">Cortesia</div>
<svg class="a" style="left:3.5px;top:24.9px" width="9" height="9"><defs><radialGradient id="dm2" cx="50%" cy="50%" r="50%"><stop offset="0" stop-color="#a8f0a0"/><stop offset="0.5" stop-color="#3cc83c"/><stop offset="1" stop-color="#1a8a1a"/></radialGradient></defs><path d="M4.5 0.3L8.7 4.5L4.5 8.7L0.3 4.5Z" fill="url(#dm2)" stroke="#208a20" stroke-width="0.5"/></svg>
<div class="t k" style="left:18.0px;top:25.8px;font-size:9px;color:#1a1a1a;font-family:'Liberation Sans',sans-serif;font-weight:400;font-style:normal;transform:scaleX(0.96);">Custo medio da tabela</div>
<svg class="a" style="left:3.5px;top:36.9px" width="9" height="9"><defs><radialGradient id="dm3" cx="50%" cy="50%" r="50%"><stop offset="0" stop-color="#a8f0a0"/><stop offset="0.5" stop-color="#3cc83c"/><stop offset="1" stop-color="#1a8a1a"/></radialGradient></defs><path d="M4.5 0.3L8.7 4.5L4.5 8.7L0.3 4.5Z" fill="url(#dm3)" stroke="#208a20" stroke-width="0.5"/></svg>
<div class="t k" style="left:18.0px;top:37.8px;font-size:9px;color:#1a1a1a;font-family:'Liberation Sans',sans-serif;font-weight:400;font-style:normal;transform:scaleX(0.96);">Desconto total</div>
<svg class="a" style="left:3.5px;top:48.9px" width="9" height="9"><defs><radialGradient id="dm4" cx="50%" cy="50%" r="50%"><stop offset="0" stop-color="#a8f0a0"/><stop offset="0.5" stop-color="#3cc83c"/><stop offset="1" stop-color="#1a8a1a"/></radialGradient></defs><path d="M4.5 0.3L8.7 4.5L4.5 8.7L0.3 4.5Z" fill="url(#dm4)" stroke="#208a20" stroke-width="0.5"/></svg>
<div class="t k" style="left:18.0px;top:49.8px;font-size:9px;color:#1a1a1a;font-family:'Liberation Sans',sans-serif;font-weight:400;font-style:normal;transform:scaleX(0.96);">Num  de vendas</div>
<svg class="a" style="left:3.5px;top:60.9px" width="9" height="9"><defs><radialGradient id="dm5" cx="50%" cy="50%" r="50%"><stop offset="0" stop-color="#a8f0a0"/><stop offset="0.5" stop-color="#3cc83c"/><stop offset="1" stop-color="#1a8a1a"/></radialGradient></defs><path d="M4.5 0.3L8.7 4.5L4.5 8.7L0.3 4.5Z" fill="url(#dm5)" stroke="#208a20" stroke-width="0.5"/></svg>
<div class="t k" style="left:18.0px;top:61.8px;font-size:9px;color:#1a1a1a;font-family:'Liberation Sans',sans-serif;font-weight:400;font-style:normal;transform:scaleX(0.96);">Preco custo</div>
<svg class="a" style="left:3.5px;top:72.9px" width="9" height="9"><defs><radialGradient id="dm6" cx="50%" cy="50%" r="50%"><stop offset="0" stop-color="#a8f0a0"/><stop offset="0.5" stop-color="#3cc83c"/><stop offset="1" stop-color="#1a8a1a"/></radialGradient></defs><path d="M4.5 0.3L8.7 4.5L4.5 8.7L0.3 4.5Z" fill="url(#dm6)" stroke="#208a20" stroke-width="0.5"/></svg>
<div class="t k" style="left:18.0px;top:73.8px;font-size:9px;color:#1a1a1a;font-family:'Liberation Sans',sans-serif;font-weight:400;font-style:normal;transform:scaleX(0.96);">Preco medio da tabela</div>
<svg class="a" style="left:3.5px;top:84.9px" width="9" height="9"><defs><radialGradient id="dm7" cx="50%" cy="50%" r="50%"><stop offset="0" stop-color="#a8f0a0"/><stop offset="0.5" stop-color="#3cc83c"/><stop offset="1" stop-color="#1a8a1a"/></radialGradient></defs><path d="M4.5 0.3L8.7 4.5L4.5 8.7L0.3 4.5Z" fill="url(#dm7)" stroke="#208a20" stroke-width="0.5"/></svg>
<div class="t k" style="left:18.0px;top:85.8px;font-size:9px;color:#1a1a1a;font-family:'Liberation Sans',sans-serif;font-weight:400;font-style:normal;transform:scaleX(0.96);">Preco medio unitario</div>
<svg class="a" style="left:3.5px;top:96.9px" width="9" height="9"><defs><radialGradient id="dm8" cx="50%" cy="50%" r="50%"><stop offset="0" stop-color="#a8f0a0"/><stop offset="0.5" stop-color="#3cc83c"/><stop offset="1" stop-color="#1a8a1a"/></radialGradient></defs><path d="M4.5 0.3L8.7 4.5L4.5 8.7L0.3 4.5Z" fill="url(#dm8)" stroke="#208a20" stroke-width="0.5"/></svg>
<div class="t k" style="left:18.0px;top:97.8px;font-size:9px;color:#1a1a1a;font-family:'Liberation Sans',sans-serif;font-weight:400;font-style:normal;transform:scaleX(0.96);">Quantidade bruta</div>
<svg class="a" style="left:3.5px;top:108.9px" width="9" height="9"><defs><radialGradient id="dm9" cx="50%" cy="50%" r="50%"><stop offset="0" stop-color="#a8f0a0"/><stop offset="0.5" stop-color="#3cc83c"/><stop offset="1" stop-color="#1a8a1a"/></radialGradient></defs><path d="M4.5 0.3L8.7 4.5L4.5 8.7L0.3 4.5Z" fill="url(#dm9)" stroke="#208a20" stroke-width="0.5"/></svg>
<div class="t k" style="left:18.0px;top:109.8px;font-size:9px;color:#1a1a1a;font-family:'Liberation Sans',sans-serif;font-weight:400;font-style:normal;transform:scaleX(0.96);">Quantidade vendida</div>
<svg class="a" style="left:3.5px;top:120.9px" width="9" height="9"><defs><radialGradient id="dm10" cx="50%" cy="50%" r="50%"><stop offset="0" stop-color="#a8f0a0"/><stop offset="0.5" stop-color="#3cc83c"/><stop offset="1" stop-color="#1a8a1a"/></radialGradient></defs><path d="M4.5 0.3L8.7 4.5L4.5 8.7L0.3 4.5Z" fill="url(#dm10)" stroke="#208a20" stroke-width="0.5"/></svg>
<div class="t k" style="left:18.0px;top:121.8px;font-size:9px;color:#1a1a1a;font-family:'Liberation Sans',sans-serif;font-weight:400;font-style:normal;transform:scaleX(0.96);">Receita</div>
<svg class="a" style="left:3.5px;top:132.9px" width="9" height="9"><defs><radialGradient id="dm11" cx="50%" cy="50%" r="50%"><stop offset="0" stop-color="#a8f0a0"/><stop offset="0.5" stop-color="#3cc83c"/><stop offset="1" stop-color="#1a8a1a"/></radialGradient></defs><path d="M4.5 0.3L8.7 4.5L4.5 8.7L0.3 4.5Z" fill="url(#dm11)" stroke="#208a20" stroke-width="0.5"/></svg>
<div class="t k" style="left:18.0px;top:133.8px;font-size:9px;color:#1a1a1a;font-family:'Liberation Sans',sans-serif;font-weight:400;font-style:normal;transform:scaleX(0.96);">Receita bruta</div>
<svg class="a" style="left:3.5px;top:144.9px" width="9" height="9"><defs><radialGradient id="dm12" cx="50%" cy="50%" r="50%"><stop offset="0" stop-color="#a8f0a0"/><stop offset="0.5" stop-color="#3cc83c"/><stop offset="1" stop-color="#1a8a1a"/></radialGradient></defs><path d="M4.5 0.3L8.7 4.5L4.5 8.7L0.3 4.5Z" fill="url(#dm12)" stroke="#208a20" stroke-width="0.5"/></svg>
<div class="t k" style="left:18.0px;top:145.8px;font-size:9px;color:#1a1a1a;font-family:'Liberation Sans',sans-serif;font-weight:400;font-style:normal;transform:scaleX(0.96);">Valor desconto</div>
<svg class="a" style="left:3.5px;top:156.9px" width="9" height="9"><defs><radialGradient id="dm13" cx="50%" cy="50%" r="50%"><stop offset="0" stop-color="#a8f0a0"/><stop offset="0.5" stop-color="#3cc83c"/><stop offset="1" stop-color="#1a8a1a"/></radialGradient></defs><path d="M4.5 0.3L8.7 4.5L4.5 8.7L0.3 4.5Z" fill="url(#dm13)" stroke="#208a20" stroke-width="0.5"/></svg>
<div class="t k" style="left:18.0px;top:157.8px;font-size:9px;color:#1a1a1a;font-family:'Liberation Sans',sans-serif;font-weight:400;font-style:normal;transform:scaleX(0.96);">Valor frete</div>
<svg class="a" style="left:3.5px;top:168.9px" width="9" height="9"><defs><radialGradient id="dm14" cx="50%" cy="50%" r="50%"><stop offset="0" stop-color="#a8f0a0"/><stop offset="0.5" stop-color="#3cc83c"/><stop offset="1" stop-color="#1a8a1a"/></radialGradient></defs><path d="M4.5 0.3L8.7 4.5L4.5 8.7L0.3 4.5Z" fill="url(#dm14)" stroke="#208a20" stroke-width="0.5"/></svg>
<div class="t k" style="left:18.0px;top:169.8px;font-size:9px;color:#1a1a1a;font-family:'Liberation Sans',sans-serif;font-weight:400;font-style:normal;transform:scaleX(0.96);">Valor icms</div>
<svg class="a" style="left:3.5px;top:180.9px" width="9" height="9"><defs><radialGradient id="dm15" cx="50%" cy="50%" r="50%"><stop offset="0" stop-color="#a8f0a0"/><stop offset="0.5" stop-color="#3cc83c"/><stop offset="1" stop-color="#1a8a1a"/></radialGradient></defs><path d="M4.5 0.3L8.7 4.5L4.5 8.7L0.3 4.5Z" fill="url(#dm15)" stroke="#208a20" stroke-width="0.5"/></svg>
<div class="t k" style="left:18.0px;top:181.8px;font-size:9px;color:#1a1a1a;font-family:'Liberation Sans',sans-serif;font-weight:400;font-style:normal;transform:scaleX(0.96);">Valor ipi</div>
</div>
<div class="a" style="left:706px;top:504px;width:313px;height:20px;background:#fcfcfc"></div>
<div class="a" style="left:748px;top:504px;width:268px;height:1px;background:#8a8a8a"></div>
<div class="a" style="left:711px;top:504px;width:38px;height:16px;background:#f0f0f0;border-right:1px solid #8a8a8a;border-bottom:1px solid #8a8a8a;border-left:1px solid #e0e0e0"></div>
<div class="t k" style="left:713.7px;top:508.3px;font-size:9px;color:#222;font-family:'Liberation Sans',sans-serif;font-weight:400;font-style:normal;transform:scaleX(0.993);">Objetos</div>
<div class="t k" style="left:752.5px;top:508.3px;font-size:9px;color:#222;font-family:'Liberation Sans',sans-serif;font-weight:400;font-style:normal;transform:scaleX(0.951);">Propriedades</div>
<svg class="a" style="left:8px;top:527px" width="12" height="12"><circle cx="6" cy="3.6" r="3.3" fill="#fff"/><path d="M0 12Q0 7.5 6 7.5Q12 7.5 12 12Z" fill="#fff"/></svg>
<div class="t" style="left:21.2px;top:528.6px;font-size:9px;color:#e6e8ea;font-family:'Liberation Sans',sans-serif;font-weight:400;font-style:normal;transform:scaleX(0.830);">MILLENNIUM</div>

<div class="a" style="left:0;top:546px;width:1024px;height:30px;background:linear-gradient(90deg,#2a6aaa 0%,#3a8ccc 5%,#52a6dc 11%,#58acde 24%,#4c9ed8 38%,#3e90d0 52%,#3888ca 64%,#2c72ba 72%,#2464ac 82%,#1f5aa0 92%,#1c5294 100%)"></div>
<div class="a" style="left:0;top:546px;width:1024px;height:1px;background:#8abce0"></div>
<svg class="a" style="left:560px;top:547px" width="200" height="29"><path d="M0 4Q80 -6 150 8Q175 18 182 29H176Q165 14 140 7Q80 -2 0 12Z" fill="#5aaae0" opacity="0.35"/><path d="M110 0Q160 6 180 29" fill="none" stroke="#a8d6f4" stroke-width="3.5" opacity="0.85"/></svg>
<!-- start orb -->
<svg class="a" style="left:5px;top:546px" width="30" height="30">
 <defs><radialGradient id="orb" cx="50%" cy="40%" r="60%"><stop offset="0" stop-color="#3a88c8"/><stop offset="0.55" stop-color="#1c5aa0"/><stop offset="0.85" stop-color="#1a70b8"/><stop offset="1" stop-color="#60c0f0"/></radialGradient>
 <linearGradient id="gl" x1="0" y1="0" x2="0" y2="1"><stop offset="0" stop-color="#fff" stop-opacity="0.55"/><stop offset="1" stop-color="#fff" stop-opacity="0.05"/></linearGradient></defs>
 <circle cx="15" cy="15" r="13.6" fill="url(#orb)" stroke="#8cc0e4" stroke-width="0.9"/>
 <path d="M7.5 8.8Q10.8 7.2 14.3 8.8V14.2Q10.8 12.8 7.5 14.2Z" fill="#f25a22"/>
 <path d="M15.4 8.8Q18.8 10.3 22.5 8.6V14.1Q18.8 15.6 15.4 14.2Z" fill="#80c440"/>
 <path d="M7.5 15.2Q10.8 13.8 14.3 15.2V20.8Q10.8 19.2 7.5 20.8Z" fill="#30a8ee"/>
 <path d="M15.4 15.3Q18.8 16.6 22.5 15.1V20.6Q18.8 22.2 15.4 20.8Z" fill="#fcc020"/>
 <ellipse cx="15" cy="9" rx="10.5" ry="6.5" fill="url(#gl)"/>
</svg>
<!-- IE -->
<svg class="a" style="left:54px;top:548px" width="25" height="25">
 <path d="M18.6 16.6A6.6 6.6 0 1 1 19.3 12.6H6.5" fill="none" stroke="#56c2f2" stroke-width="3.4"/>
 <path d="M2.5 21.5Q0.5 17.5 7 10.5Q17 1.5 22 2.5Q24.5 4 21 9" fill="none" stroke="#f0c838" stroke-width="2"/>
</svg>
<!-- explorer button -->
<div class="a" style="left:92px;top:547px;width:43px;height:29px;background:linear-gradient(#8ec4ea,#6eb0e0);border:1px solid #b8dcf4;border-radius:2px"></div>
<svg class="a" style="left:100px;top:551px" width="26" height="21">
 <path d="M1 2H9L11 4H25V20H1Z" fill="#e8d28a"/>
 <rect x="2" y="5" width="22" height="14" fill="#f6e6a8"/>
 <rect x="4" y="3" width="8" height="3" fill="#c8a860"/>
 <rect x="7" y="13" width="12" height="7" fill="#8cc0e8"/>
 <rect x="9" y="15" width="8" height="3" fill="#d8ecf8"/>
</svg>
<!-- media player -->
<div class="a" style="left:150px;top:553px;width:18px;height:17px;background:#a8d0ec;opacity:0.8"></div>
<svg class="a" style="left:150px;top:555px" width="14" height="14"><circle cx="7" cy="6.5" r="6" fill="#e8782a"/><path d="M5 3.2L10 6.5L5 9.8Z" fill="#fff"/></svg>
<!-- M icon 1 -->
<svg class="a" style="left:194px;top:550px" width="24" height="23">
 <defs><linearGradient id="mg" x1="0" y1="0" x2="0" y2="1"><stop offset="0" stop-color="#6aa0c0"/><stop offset="0.45" stop-color="#2a6488"/><stop offset="1" stop-color="#0e3450"/></linearGradient></defs>
 <rect x="0.5" y="0.5" width="23" height="22" rx="5" fill="url(#mg)" stroke="#0a2a40" stroke-width="0.8"/>
 <path d="M5.5 17V5.5H8L12 12.5L16 5.5H18.5V17H16.6V9L12.7 15.5H11.3L7.4 9V17Z" fill="#f4f8fc"/>
</svg>
<!-- blob -->
<svg class="a" style="left:239px;top:550px" width="28" height="24">
 <ellipse cx="14" cy="7.5" rx="8.5" ry="5.5" fill="#0a1a8c"/>
 <circle cx="4.5" cy="5" r="2.4" fill="#0a1a8c"/><circle cx="23.5" cy="9" r="2.8" fill="none" stroke="#0a1a8c" stroke-width="1.6"/>
 <circle cx="4" cy="10" r="1.6" fill="#0a1a8c"/>
 <circle cx="11" cy="5" r="1.5" fill="#6a7ad8"/>
 <rect x="3.5" y="16" width="2.2" height="7" fill="#e8e020"/><rect x="8" y="15" width="2.2" height="7" fill="#e8e020"/>
</svg>
<!-- chrome button -->
<div class="a" style="left:277px;top:547px;width:44px;height:29px;background:linear-gradient(#74b4e2,#5aa2d8);border:1px solid #9ccaee;border-radius:2px"></div>
<svg class="a" style="left:288px;top:550px" width="22" height="22">
 <g transform="translate(11 11)">
 <path d="M0 0L-9.5 -5.5A11 11 0 0 1 9.5 -5.5Z" fill="#d8382a"/>
 <path d="M0 0L9.5 -5.5A11 11 0 0 1 0 11Z" fill="#f0c020"/>
 <path d="M0 0L0 11A11 11 0 0 1 -9.5 -5.5Z" fill="#3aa040"/>
 <circle r="5" fill="#fff"/><circle r="3.8" fill="#3a78d0"/>
 </g>
</svg>
<!-- M button 2 -->
<div class="a" style="left:323px;top:547px;width:44px;height:29px;background:linear-gradient(#b8d8f0,#9ac6ea);border:1px solid #d0e8f8;border-radius:2px"></div>
<svg class="a" style="left:334px;top:550px" width="23" height="22">
 <rect x="0.5" y="0.5" width="22" height="21" rx="5" fill="url(#mg)" stroke="#0a2a40" stroke-width="0.8"/>
 <path d="M5 16.5V5H7.5L11.5 12L15.5 5H18V16.5H16.1V8.5L12.2 15H10.8L6.9 8.5V16.5Z" fill="#f4f8fc"/>
</svg>
<!-- excel button -->
<div class="a" style="left:370px;top:547px;width:44px;height:29px;background:linear-gradient(#74b4e2,#5aa2d8);border:1px solid #9ccaee;border-radius:2px"></div>
<svg class="a" style="left:380px;top:550px" width="24" height="22">
 <rect x="2" y="1" width="18" height="17" fill="#e0f0c8" stroke="#98c080" stroke-width="0.6"/>
 <rect x="4" y="4" width="19" height="17" fill="#f0f8e0" stroke="#88b878" stroke-width="0.6"/>
 <path d="M13 7H21M13 11H21M13 15H21M5 15H12M5 19H21" stroke="#7ab060" stroke-width="2"/>
 <path d="M5 5L11 12M11 5L5 12" stroke="#1a7a2a" stroke-width="2.2"/>
</svg>
<!-- tray -->
<div class="a" style="left:884px;top:559px;width:0;height:0;border-left:3.5px solid transparent;border-right:3.5px solid transparent;border-bottom:4px solid #fff"></div>
<div class="a" style="left:903px;top:557px;width:7px;height:11px;border:1px solid #e8eef4;border-radius:1px;background:#c8d4e0"></div>
<div class="a" style="left:905px;top:556px;width:3px;height:1px;background:#e8eef4"></div>
<svg class="a" style="left:917px;top:556px" width="13" height="12"><path d="M1 11H3V10H1ZM4 11H6V8H4ZM7 11H9V5.5H7ZM10 11H12V2H10Z" fill="#f0f4f8"/></svg>
<svg class="a" style="left:935px;top:555px" width="15" height="14"><path d="M1 5H4L8 1.5V12.5L4 9H1Z" fill="#f0f0f0"/><circle cx="10.5" cy="9.5" r="3.6" fill="#d82a2a" stroke="#fff" stroke-width="0.8"/><path d="M8.5 7.5L12.5 11.5" stroke="#fff" stroke-width="1"/></svg>
<div class="a" style="left:1013px;top:547px;width:11px;height:29px;background:linear-gradient(90deg,#3a6aa0,#24508a);border-left:1px solid #6a9aca"></div>

<div class="t" style="left:972.5px;top:551.7px;font-size:9px;color:#f4f8fc;font-family:'Liberation Sans',sans-serif;font-weight:400;font-style:normal;transform:scaleX(0.923);">15:16</div>
<div class="t" style="left:960.5px;top:564.7px;font-size:9px;color:#f4f8fc;font-family:'Liberation Sans',sans-serif;font-weight:400;font-style:normal;transform:scaleX(0.972);">13/03/2014</div>
</body></html>
